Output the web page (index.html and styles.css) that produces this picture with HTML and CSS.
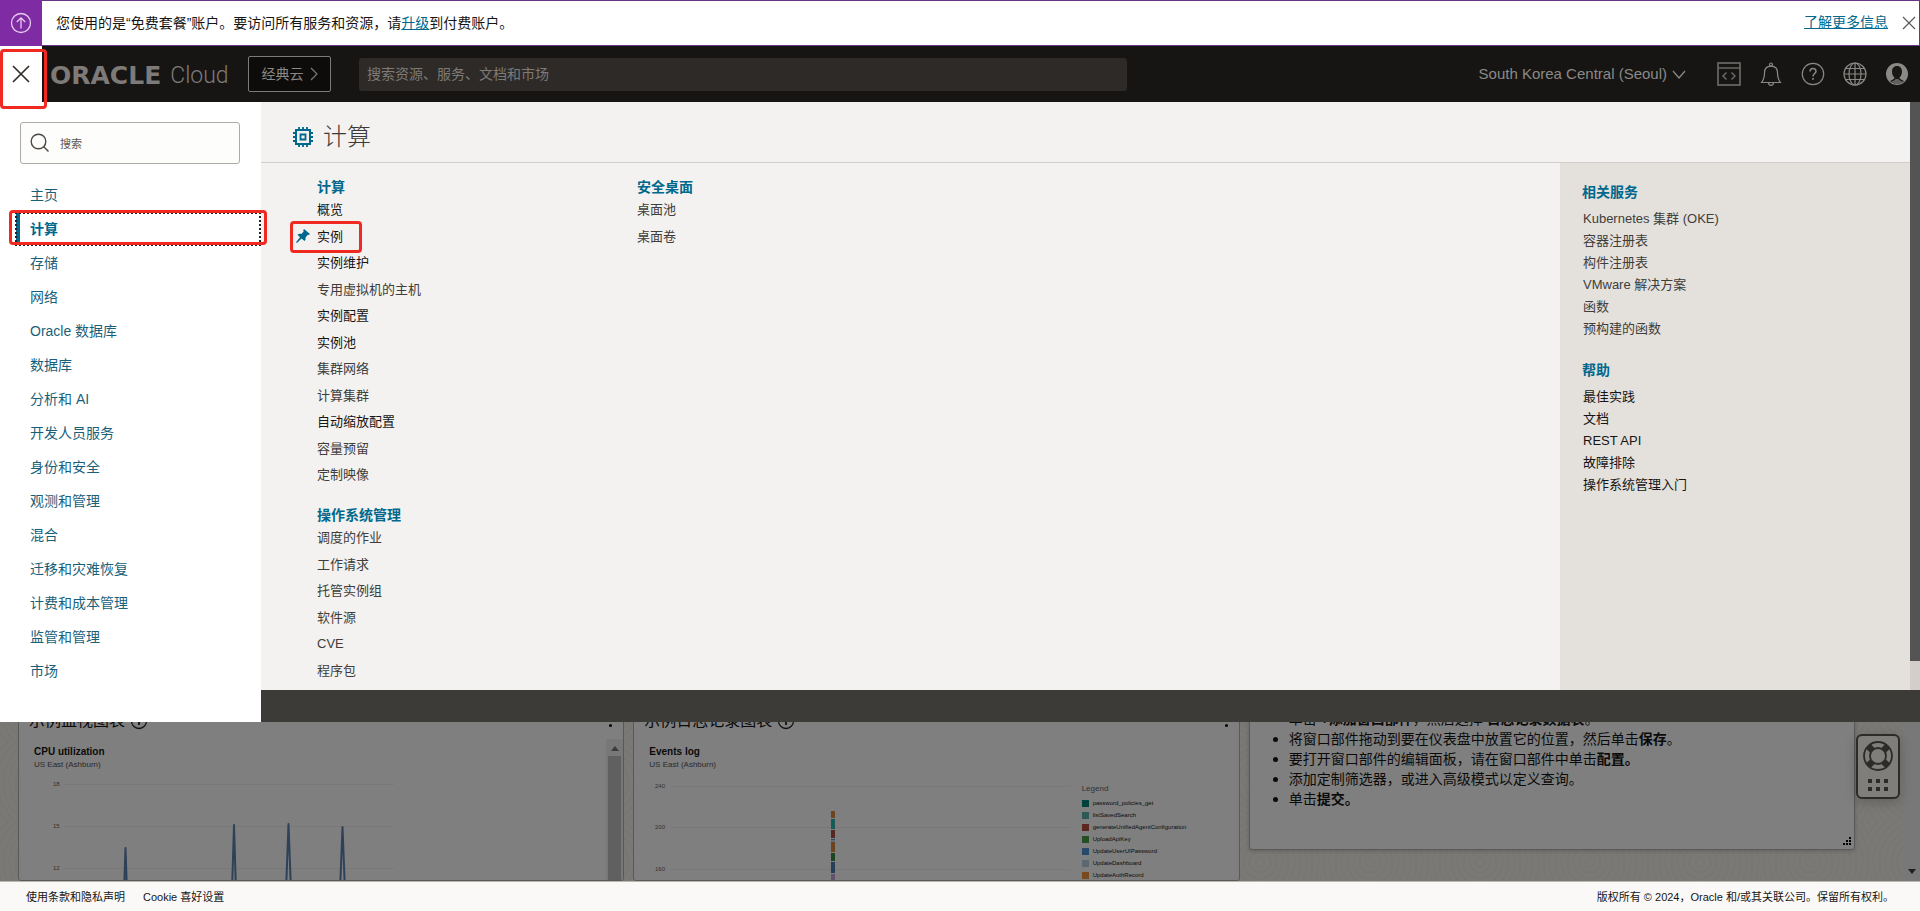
FILE: index.html
```html
<!DOCTYPE html>
<html lang="zh-CN">
<head>
<meta charset="utf-8">
<title>Oracle Cloud</title>
<link rel="stylesheet" href="styles.css">
</head>
<body>
<div class="banner">
  <span class="banner-icon">
    <svg width="22" height="22" viewBox="0 0 22 22" fill="none" stroke="#e6cdf0" stroke-width="1.3"><circle cx="11" cy="11" r="9.5"/><path d="M11 16.5V6M6.8 10L11 5.8L15.2 10"/></svg>
  </span>
  <p class="banner-text">您使用的是“免费套餐”账户。要访问所有服务和资源，请<a href="#">升级</a>到付费账户。</p>
  <a class="banner-more" href="#">了解更多信息</a>
  <button class="banner-close" aria-label="关闭"><svg width="14" height="14" viewBox="0 0 14 14" stroke="#5b5b5b" stroke-width="1.2"><path d="M1 1L13 13M13 1L1 13"/></svg></button>
</div>

<header class="topbar">
  <button class="menu-close" aria-label="关闭菜单">
    <svg width="18" height="18" viewBox="0 0 18 18" stroke="#312d2a" stroke-width="1.7"><path d="M1 1L17 17M17 1L1 17"/></svg>
    <span class="mark mark-close"></span>
  </button>
  <a class="brand" href="#"><span class="brand-name">ORACLE</span><span class="brand-sub">Cloud</span></a>
  <button class="classic">经典云<svg width="8" height="14" viewBox="0 0 8 14" fill="none" stroke="#7d7a77" stroke-width="1.2"><path d="M1 1L7 7L1 13"/></svg></button>
  <input class="top-search" type="text" aria-label="搜索资源" placeholder="搜索资源、服务、文档和市场">
  <button class="region">South Korea Central (Seoul)<svg width="14" height="9" viewBox="0 0 14 9" fill="none" stroke="#8b8986" stroke-width="1.3"><path d="M1 1L7 8L13 1"/></svg></button>
  <div class="tools">
    <button aria-label="开发人员工具"><svg width="24" height="24" viewBox="0 0 24 24" fill="none" stroke="#6f6d6b"><rect x="1" y="1" width="22" height="22" stroke-width="1.6"/><path d="M1 6H23" stroke-width="1.4"/><path d="M9.5 10.5L6 14L9.5 17.5M14.5 10.5L18 14L14.5 17.5" stroke-width="1.4"/></svg></button>
    <button aria-label="通知"><svg width="24" height="24" viewBox="0 0 24 24" fill="none" stroke="#8b8986" stroke-width="1.2"><circle cx="12" cy="2.5" r="1.5"/><path d="M2.5 20.5C4.500 18 5.500 16 5.500 11C5.500 6.500 8 4.200 12 4.200S18.500 6.500 18.500 11C18.500 16 19.500 18 21.500 20.500Z"/><path d="M9.500 20.500C9.500 24.200 14.500 24.200 14.500 20.500"/></svg></button>
    <button aria-label="帮助"><svg width="24" height="24" viewBox="0 0 24 24" fill="none" stroke="#8b8986" stroke-width="1.2"><circle cx="12" cy="12" r="10.700"/><path d="M9 9.500C9 5.500 15 5.500 15 9.200C15 11.500 12 11.500 12 14.500" stroke-width="1.500"/><path d="M12 16V17.800" stroke-width="1.700"/></svg></button>
    <button aria-label="语言"><svg width="24" height="24" viewBox="0 0 24 24" fill="none" stroke="#8b8986" stroke-width="1.200"><circle cx="12" cy="12" r="11"/><ellipse cx="12" cy="12" rx="6" ry="11"/><path d="M12 1V23M1 12H23M3 6.500H21M3 17.500H21"/></svg></button>
    <button aria-label="个人资料"><svg width="24" height="24" viewBox="0 0 24 24"><circle cx="12" cy="12" r="11" fill="#8b8986"/><path d="M12 4C8.600 4 7 6.600 7 9.700C7 12.500 8.200 14.500 9.600 15.600C9.600 17 7.500 18 5 19C9 22.500 15 22.500 19 19C16.500 18 14.400 17 14.400 15.600C15.800 14.500 17 12.500 17 9.700C17 6.600 15.400 4 12 4Z" fill="#1a1816"/><path d="M6 20.300C7 18.800 10 18.500 10.500 17L13.500 17C14 18.500 17 18.800 18 20.300C14.500 22.700 9.500 22.700 6 20.300Z" fill="#63615f"/></svg></button>
  </div>
</header>

<main class="stage">
  <div class="dashboard">
    <section class="card">
      <div class="card-head"><h2>示例监视图表</h2><svg width="18" height="18" viewBox="0 0 18 18" fill="none" stroke="#222" stroke-width="1.300"><circle cx="9" cy="9" r="7.500"/><path d="M9 8V13M9 5V6.500" stroke-width="1.800"/></svg><button class="kebab" aria-label="更多操作"><i></i><i></i><i></i></button></div>
      <div class="card-body">
        <div class="chart">
          <h3>CPU utilization</h3>
          <p>US East (Ashburn)</p>
          <svg class="plot" width="380" height="120" viewBox="0 0 380 120" font-family="Liberation Sans, Arial, sans-serif" font-size="6" fill="#666">
            <g stroke="#f0f0f0" stroke-width="1"><path d="M30 13.500H360M30 55.500H360M30 97.500H360"/></g>
            <text x="19" y="15">18</text><text x="19" y="57">15</text><text x="19" y="99">12</text>
            <g fill="none" stroke="#5a82b0" stroke-width="2" stroke-linejoin="round"><path d="M90 120L91.500 77L93 120M198 120L200 54L202 120M252 120L254.500 53L257 120M306 120L308.500 56L311 120"/></g>
          </svg>
        </div>
        <div class="card-scroll"><svg width="8" height="5" viewBox="0 0 8 5"><path d="M4 0L8 5H0Z" fill="#777"/></svg><span></span></div>
      </div>
    </section>
    <section class="card">
      <div class="card-head"><h2>示例日志记录图表</h2><svg width="18" height="18" viewBox="0 0 18 18" fill="none" stroke="#222" stroke-width="1.300"><circle cx="9" cy="9" r="7.500"/><path d="M9 8V13M9 5V6.500" stroke-width="1.800"/></svg><button class="kebab" aria-label="更多操作"><i></i><i></i><i></i></button></div>
      <div class="card-body">
        <div class="chart">
          <h3>Events log</h3>
          <p>US East (Ashburn)</p>
          <svg class="plot" width="430" height="120" viewBox="0 0 430 120" font-family="Liberation Sans, Arial, sans-serif" font-size="6" fill="#666">
            <g stroke="#f0f0f0" stroke-width="1"><path d="M22 15.500H421M22 56.500H421M22 98.500H421"/></g>
            <text x="6" y="17">240</text><text x="6" y="58">200</text><text x="6" y="100">160</text>
            <rect x="182" y="40" width="4" height="7" fill="#d98845"/><rect x="182" y="48" width="4" height="10" fill="#2fb5ac"/><rect x="182" y="59" width="4" height="8" fill="#a85146"/><rect x="182" y="68" width="4" height="1" fill="#5a9bd5"/><rect x="182" y="69" width="4" height="2" fill="#c2dcf2"/><rect x="182" y="71" width="4" height="10" fill="#d98845"/><rect x="182" y="82" width="4" height="8" fill="#3c8a43"/><rect x="182" y="91" width="4" height="11" fill="#4f7db0"/><rect x="182" y="103" width="4" height="17" fill="#c3a5dd"/>
          </svg>
        </div>
        <div class="legend">
          <b>Legend</b>
          <span class="c1">password_policies_get</span>
          <span class="c2">listSavedSearch</span>
          <span class="c3">generateUnifiedAgentConfiguration</span>
          <span class="c4">UploadApiKey</span>
          <span class="c5">UpdateUserUIPassword</span>
          <span class="c6">UpdateDashboard</span>
          <span class="c7">UpdateAuthRecord</span>
        </div>
      </div>
    </section>
    <section class="card card-tips">
      <ul>
        <li>单击 <b>+添加窗口部件</b>，然后选择 <b>日志记录数据表</b>。</li>
        <li>将窗口部件拖动到要在仪表盘中放置它的位置，然后单击<b>保存</b>。</li>
        <li>要打开窗口部件的编辑面板，请在窗口部件中单击<b>配置。</b></li>
        <li>添加定制筛选器，或进入高级模式以定义查询。</li>
        <li>单击<b>提交。</b></li>
      </ul>
      <svg class="grip" width="8" height="8" viewBox="0 0 8 8" fill="#000"><path d="M6 0h2v2H6zM6 3h2v2H6zM3 3h2v2H3zM6 6h2v2H6zM3 6h2v2H3zM0 6h2v2H0z"/></svg>
    </section>
    <div class="page-scroll"><svg width="8" height="5" viewBox="0 0 8 5"><path d="M0 0H8L4 5Z" fill="#3d3d3d"/></svg></div>
  </div>
  <div class="scrim"></div>
  <button class="support" aria-label="支持">
    <svg width="30" height="52" viewBox="0 0 30 52" fill="none" stroke="#2b2b29">
      <circle cx="15" cy="15" r="14" stroke-width="1.800"/><circle cx="15" cy="15" r="8" stroke-width="1.800"/>
      <path d="M5.500 5.500L9.300 9.300M24.500 5.500L20.700 9.300M5.500 24.500L9.300 20.700M24.500 24.500L20.700 20.700" stroke-width="6.500"/>
      <path d="M5 38h4v4H5zM13 38h4v4h-4zM21 38h4v4h-4zM5 46h4v4H5zM13 46h4v4h-4zM21 46h4v4h-4z" fill="#2b2b29" stroke="none"/>
    </svg>
  </button>

  <div class="menu">
    <nav class="side">
      <label class="side-search">
        <svg width="20" height="20" viewBox="0 0 20 20" fill="none" stroke="#4a4744" stroke-width="1.400"><circle cx="8.500" cy="8.500" r="7.300"/><path d="M13.800 13.800L18.500 18.500"/></svg>
        <input type="text" aria-label="搜索" placeholder="搜索">
      </label>
      <ul>
        <li><a href="#">主页</a></li>
        <li class="current"><a href="#">计算</a><span class="mark mark-side"></span></li>
        <li><a href="#">存储</a></li>
        <li><a href="#">网络</a></li>
        <li><a href="#">Oracle 数据库</a></li>
        <li><a href="#">数据库</a></li>
        <li><a href="#">分析和 AI</a></li>
        <li><a href="#">开发人员服务</a></li>
        <li><a href="#">身份和安全</a></li>
        <li><a href="#">观测和管理</a></li>
        <li><a href="#">混合</a></li>
        <li><a href="#">迁移和灾难恢复</a></li>
        <li><a href="#">计费和成本管理</a></li>
        <li><a href="#">监管和管理</a></li>
        <li><a href="#">市场</a></li>
      </ul>
    </nav>
    <div class="panel">
      <div class="panel-head">
        <svg width="20" height="20" viewBox="0 0 20 20" fill="none" stroke="#00688c"><path d="M3 3H17V17H3Z" stroke-width="2"/><path d="M7.500 7.500H12.500V12.500H7.500Z" stroke-width="1.800"/><path d="M6 0V3M10 0V3M14 0V3M6 17V20M10 17V20M14 17V20M0 6H3M0 10H3M0 14H3M17 6H20M17 10H20M17 14H20" stroke-width="1.800"/></svg>
        <h1>计算</h1>
      </div>
      <div class="panel-body">
        <div class="col">
          <h2>计算</h2>
          <ul>
            <li class="seen"><a href="#">概览</a></li>
            <li class="seen pinned"><svg class="pin" width="14" height="14" viewBox="0 0 14 14" fill="#00688c"><path d="M8 0L14 5L12.600 6L11.800 5.800L9.500 8.500C9.800 10 9.500 11 8.600 11.900L5.500 9.500L1 14L0 13.300L4 8.300L1.500 5.800C2.500 4.900 3.800 4.700 5.300 5L7.700 2.500L7.200 1.200Z"/></svg><a href="#">实例</a><span class="mark mark-pin"></span></li>
            <li class="seen"><a href="#">实例维护</a></li>
            <li><a href="#">专用虚拟机的主机</a></li>
            <li class="seen"><a href="#">实例配置</a></li>
            <li class="seen"><a href="#">实例池</a></li>
            <li><a href="#">集群网络</a></li>
            <li><a href="#">计算集群</a></li>
            <li class="seen"><a href="#">自动缩放配置</a></li>
            <li><a href="#">容量预留</a></li>
            <li><a href="#">定制映像</a></li>
          </ul>
          <h2>操作系统管理</h2>
          <ul>
            <li><a href="#">调度的作业</a></li>
            <li><a href="#">工作请求</a></li>
            <li><a href="#">托管实例组</a></li>
            <li><a href="#">软件源</a></li>
            <li><a href="#">CVE</a></li>
            <li><a href="#">程序包</a></li>
          </ul>
        </div>
        <div class="col">
          <h2>安全桌面</h2>
          <ul>
            <li><a href="#">桌面池</a></li>
            <li><a href="#">桌面卷</a></li>
          </ul>
        </div>
        <aside class="related">
          <h2>相关服务</h2>
          <ul>
            <li><a href="#">Kubernetes 集群 (OKE)</a></li>
            <li><a href="#">容器注册表</a></li>
            <li><a href="#">构件注册表</a></li>
            <li><a href="#">VMware 解决方案</a></li>
            <li><a href="#">函数</a></li>
            <li><a href="#">预构建的函数</a></li>
          </ul>
          <h2>帮助</h2>
          <ul>
            <li class="seen"><a href="#">最佳实践</a></li>
            <li class="seen"><a href="#">文档</a></li>
            <li class="seen"><a href="#">REST API</a></li>
            <li class="seen"><a href="#">故障排除</a></li>
            <li class="seen"><a href="#">操作系统管理入门</a></li>
          </ul>
        </aside>
      </div>
    </div>
    <div class="menu-scroll"><span></span></div>
  </div>
</main>

<footer class="foot">
  <a href="#">使用条款和隐私声明</a>
  <a href="#">Cookie 喜好设置</a>
  <span>版权所有 © 2024，Oracle 和/或其关联公司。保留所有权利。</span>
</footer>
</body>
</html>
```

FILE: styles.css
```css
* { box-sizing: border-box; }
body {
  margin: 0;
  height: 100vh;
  display: flex;
  flex-direction: column;
  overflow: hidden;
  font: 14px/20px "Liberation Sans", Arial, "Noto Sans CJK SC", sans-serif;
  color: #161513;
}
h1, h2, h3, p, ul { margin: 0; padding: 0; }
ul { list-style: none; }
a { color: inherit; text-decoration: none; }
svg { display: block; flex: none; }
button { border: 0; padding: 0; background: none; font: inherit; color: inherit; display: flex; align-items: center; justify-content: center; }
input { font: inherit; border: 0; outline: 0; min-width: 0; }

.mark { position: absolute; border: 3px solid #f02a20; border-radius: 4px; pointer-events: none; z-index: 5; }
.mark-close { top: 3px; left: 0; width: 47px; height: 60px; }
.mark-side { top: -3px; left: 9px; right: -6px; height: 35px; }
.mark-pin { top: -2px; left: -27px; width: 72px; height: 32px; }

/* Banner */
.banner { flex: none; height: 46px; display: flex; align-items: center; border: 1px solid #6b3483; border-left: 0; background: #fff; }
.banner-icon { align-self: stretch; width: 42px; margin: -1px 14px -1px 0; display: flex; align-items: center; justify-content: center; background: #7f2ba3; }
.banner-text { flex: 1; }
.banner-text a, .banner-more { color: #00688c; text-decoration: underline; }
.banner-more { margin-right: 13px; padding-bottom: 3px; }
.banner-close { width: 16px; height: 16px; margin-right: 2px; }

/* Top bar */
.topbar { flex: none; height: 56px; display: flex; align-items: center; background: #161513; color: #8b8986; position: relative; z-index: 3; }
.menu-close { position: relative; width: 42px; height: 56px; background: #fff; }
.brand { display: flex; align-items: center; gap: 9px; margin-left: 8px; width: 198px; padding-top: 4px; color: #7d7a77; }
.brand-name { font: bold 25px/30px "DejaVu Sans", sans-serif; }
.brand-sub { font: 300 23px/30px Roboto, sans-serif; }
.classic { width: 83px; height: 36px; gap: 6px; border: 1px solid #7d7a77; border-radius: 2px; background: #0d0c0b; }
.top-search { width: 40%; height: 33px; margin-left: 28px; padding: 0 8px; border-radius: 3px; background: #2e2a28; }
.top-search::placeholder { color: #7d7a77; }
.region { margin-left: auto; gap: 5px; font-size: 15px; }
.tools { display: flex; gap: 18px; margin: 0 11px 0 31px; }

/* Stage */
.stage { flex: 1; min-height: 0; position: relative; overflow: hidden; }
.scrim { position: absolute; inset: 0; background: rgba(0, 0, 0, .5); }
.dashboard {
  height: 100%;
  padding: 600px 65px 0 18px;
  display: grid;
  grid-template-columns: repeat(3, minmax(0, 1fr));
  gap: 9px;
  background: repeating-radial-gradient(circle at 50px 40px, #f6f2ec 0 3px, #f2eee8 3px 6px) 0 0 / 110px 80px;
}
.card { background: #fff; border: 1px solid #b5b2b0; border-radius: 3px; overflow: hidden; position: relative; }
.card-head { display: flex; align-items: center; gap: 5px; height: 36px; padding: 0 11px 0 10px; }
.card-head h2 { font-weight: 400; font-size: 16px; }
.kebab { margin-left: auto; padding-bottom: 5px; flex-direction: column; gap: 4px; }
.kebab i { width: 3px; height: 3px; border-radius: 50%; background: #000; }
.card-body { display: flex; justify-content: space-between; height: 100%; }
.chart { padding: 6px 0 0 15px; }
.chart h3 { font-size: 10px; line-height: 13px; }
.chart p { font-size: 8px; line-height: 13px; color: #555; }
.card-scroll { width: 17px; background: #f1f1f1; display: flex; flex-direction: column; align-items: center; gap: 5px; padding-top: 7px; }
.card-scroll span { width: 13px; flex: 1; background: #c1c1c1; }
.legend { width: 157px; padding-top: 44px; display: flex; flex-direction: column; font-size: 6px; line-height: 12px; }
.legend b { font-weight: 400; font-size: 8px; color: #666; margin-bottom: 2px; }
.legend span { display: flex; align-items: center; gap: 4px; }
.legend span::before { content: ""; width: 7px; height: 7px; background: var(--c); }
.c1 { --c: #00857a; }
.c2 { --c: #5ab5ac; }
.c3 { --c: #b5503f; }
.c4 { --c: #44a047; }
.c5 { --c: #4f94d8; }
.c6 { --c: #b5d0e6; }
.c7 { --c: #ee9540; }
.card-tips { align-self: start; padding: 6px 20px 40px 39px; box-shadow: 0 1px 4px rgba(0, 0, 0, .2); }
.card-tips ul { list-style: disc; }
.card-tips li::marker { font-size: 16px; }
.grip { position: absolute; right: 3px; bottom: 4px; }
.page-scroll { position: absolute; top: 0; right: 0; bottom: 0; width: 17px; padding-bottom: 7px; display: flex; align-items: flex-end; justify-content: center; background: #f0f0f0; }
.support { position: absolute; right: 20px; top: 632px; width: 44px; height: 65px; border: 2px solid #2b2b29; border-radius: 6px; background: #7f7e7b; box-shadow: 0 3px 12px rgba(0, 0, 0, .2); }

/* Menu */
.menu { position: absolute; top: 0; left: 0; right: 0; display: flex; align-items: stretch; background: #3c3b38; }
.side { flex: none; width: 261px; padding: 20px 0 33px; background: #fff; }
.side-search { display: flex; align-items: center; gap: 8px; width: 220px; height: 42px; margin: 0 0 15px 20px; padding: 0 9px; border: 1px solid #b0aaa6; border-radius: 3px; background: #fdfdfb; }
.side-search input { flex: 1; padding: 2px 2px 0; background: none; font-size: 11px; }
.side-search input::placeholder { color: #5a5652; }
.side li { position: relative; margin-bottom: 2px; }
.side a { display: block; margin: 0 1px 0 16px; padding-left: 14px; line-height: 32px; color: #1a5f7a; }
.side .current a { padding-left: 10px; border-left: 4px solid #00688c; outline: 2px dotted #222; outline-offset: -1px; color: #00688c; font-weight: 700; }
.panel { flex: 1; margin-bottom: 32px; background: #f3f2f0; display: flex; flex-direction: column; }
.panel-head { display: flex; align-items: center; gap: 10px; height: 61px; padding: 9px 0 0 32px; border-bottom: 1px solid #cfcecb; }
.panel-head h1 { font-weight: 300; font-size: 24px; line-height: 30px; color: #3c3936; }
.panel-body { flex: 1; display: flex; }
.panel h2 { font-size: 14px; color: #00688c; }
.panel li { position: relative; font-size: 13px; color: #403d3a; }
.panel li.seen { color: #161513; }
.col { width: 320px; padding: 14px 0 6px 56px; }
.col ul + h2 { margin-top: 17px; }
.col li { height: 26px; line-height: 26px; }
.col li:nth-child(even) { height: 27px; line-height: 27px; }
.col ul:last-child { margin-bottom: 0; }
.pin { position: absolute; left: -21px; top: 6px; }
.related { width: 350px; margin-left: auto; padding: 19px 22px; background: #e4e1dd; }
.related h2 { margin-bottom: 6px; }
.related ul + h2 { margin-top: 20px; }
.related li { line-height: 22px; padding-left: 1px; }
.menu-scroll { flex: none; width: 10px; margin-bottom: 32px; background: #d3cecb; }
.menu-scroll span { display: block; height: 95%; background: #545454; }

/* Footer */
.foot { flex: none; height: 30px; display: flex; align-items: center; gap: 18px; padding: 0 26px; border-top: 1px solid #bcb6b1; background: #fbf9f8; font-size: 11px; }
.foot span { margin-left: auto; }
```
